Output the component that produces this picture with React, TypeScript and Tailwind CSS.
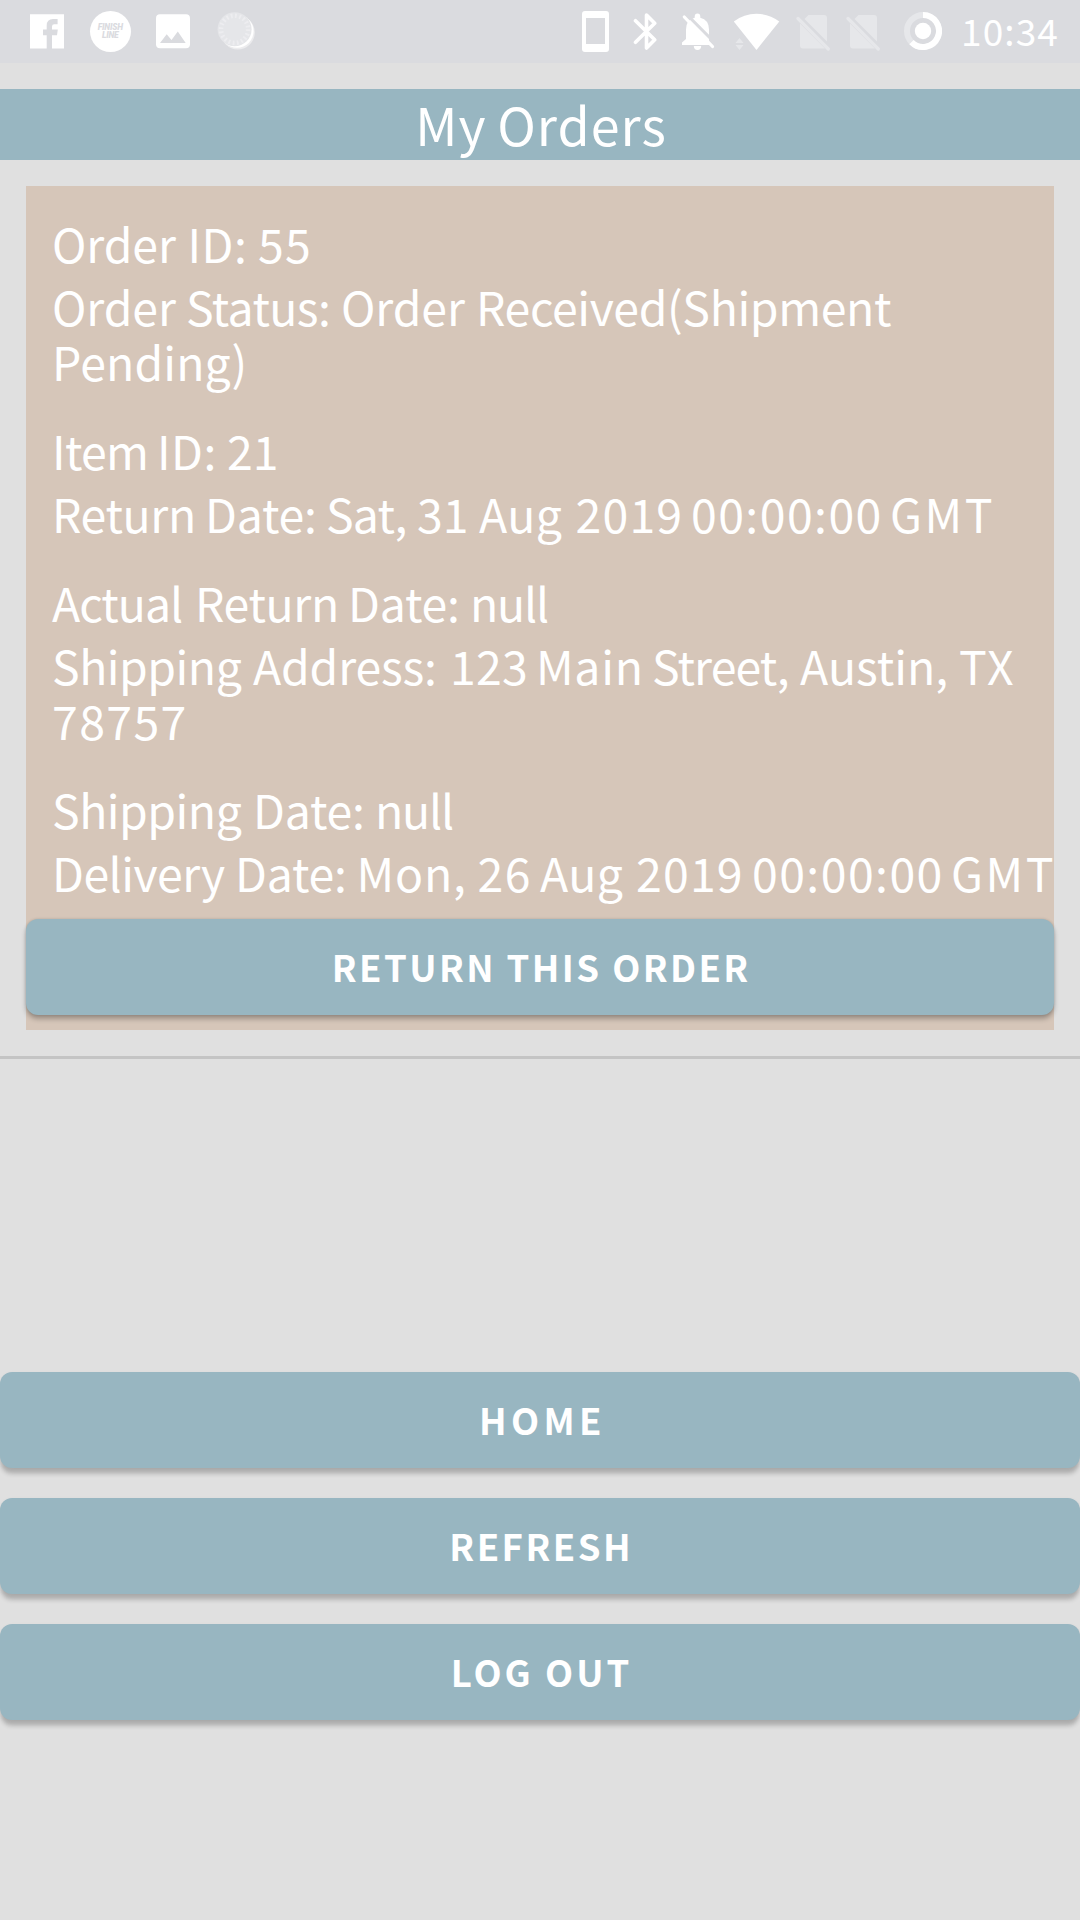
import type { ReactNode } from "react";

function FacebookIcon() {
  return (
    <svg className="h-[63px] w-[34px]" viewBox="30 0 34 63">
      <path fill="#fff" d="M30 14.3H64V48.5H52V35.2H57L57.8 29.6H52V26.5Q52 24.3 54.3 24.3H57.6V19H53Q46.7 19 46.7 25.6V29.6H43V35.2H46.7V48.5H30Z" />
    </svg>
  );
}

function FinishLineIcon() {
  return (
    <div className="mt-[10.5px] flex h-[41.5px] w-[41.5px] flex-col items-center justify-center rounded-full bg-white font-['Roboto',sans-serif] text-[8.5px] leading-[8px] font-black tracking-[-0.2px] text-[#dadbdf] italic">
      <span>FINISH</span>
      <span>LINE</span>
    </div>
  );
}

function PictureIcon() {
  return (
    <svg className="h-[63px] w-[34px]" viewBox="156.5 0 34 63">
      <rect x="156.5" y="14.3" width="34" height="34" rx="4" fill="#fff" />
      <path fill="#dadbdf" d="M160.5 43 167.2 34.3 172 40 178.3 31.5 186.2 43Z" />
    </svg>
  );
}

function EclipseIcon() {
  return (
    <svg className="h-[63px] w-[38px]" viewBox="217 0 38 63">
      <circle cx="237.8" cy="32.6" r="17" fill="#ececee" />
      <circle cx="237" cy="31.2" r="16.6" fill="#fff" />
      <circle cx="234.6" cy="29.3" r="17" fill="#e5e6e9" />
      <circle cx="234.6" cy="29.3" r="13.6" fill="none" stroke="#ededf0" strokeWidth="4.5" strokeDasharray="1.8 2.472" />
    </svg>
  );
}

function PhoneIcon() {
  return (
    <svg className="h-[63px] w-[27px]" viewBox="582 0 27 63">
      <path fill="#fff" fillRule="evenodd" d="M585 11H606Q609 11 609 14V49Q609 52 606 52H585Q582 52 582 49V14Q582 11 585 11ZM586 18V44H605V18Z" />
    </svg>
  );
}

function BluetoothIcon() {
  return (
    <svg className="h-[63px] w-[25px]" viewBox="632.5 0 25 63">
      <path fill="none" stroke="#fff" strokeWidth="3.6" strokeLinecap="round" strokeLinejoin="round" d="M635 20.7 654.2 39.7 646 48V15L654.2 23.3 635 42.3" />
    </svg>
  );
}

function BellOffIcon() {
  return (
    <svg className="h-[63px] w-[33px]" viewBox="682 0 33 63">
      <path fill="#fff" d="M694.7 17.8V16.5Q694.7 13.5 697.5 13.5T700.3 16.5V17.8Q709 20 709 29.5V42L710 45H682V42.6L686 39V29.5Q686 20 694.7 17.8ZM693.8 46H701.2Q701 50 697.5 50T693.8 46Z" />
      <path stroke="#dadbdf" strokeWidth="3" d="M686.5 14.2 716 44" />
      <path stroke="#fff" strokeWidth="3.2" strokeLinecap="round" d="M684.3 17 712.5 46.5" />
    </svg>
  );
}

function WifiIcon() {
  return (
    <svg className="h-[63px] w-[47px]" viewBox="733 0 47 63">
      <path fill="#fff" d="M756.5 50 733.8 21.5Q744 13.8 756.5 13.8T779.3 21.5Z" />
      <path fill="#e6e7ea" d="M735.5 43 739.5 38 743.5 43ZM735.5 45 739.5 50 743.5 45Z" />
    </svg>
  );
}

function NoSimIcon() {
  return (
    <svg className="h-[63px] w-[34px]" viewBox="846 0 34 63">
      <path fill="#e6e7ea" d="M858.5 15H874Q877 15 877 18V41.5L854.5 19ZM850 23.5 875 48.6H853Q850 48.6 850 45.6Z" />
      <path stroke="#e6e7ea" strokeWidth="3.2" strokeLinecap="round" d="M848 18.5 878.3 49" />
    </svg>
  );
}

function BatteryRingIcon() {
  return (
    <svg className="h-[63px] w-[38px]" viewBox="904 0 38 63">
      <circle cx="923" cy="31" r="16" fill="none" stroke="#e6e7ea" strokeWidth="6" />
      <path fill="none" stroke="#fff" strokeWidth="6" d="M923 15A16 16 0 1 1 911.5 42.1" />
      <circle cx="923" cy="31" r="8.2" fill="#fff" />
    </svg>
  );
}

function StatusBar() {
  return (
    <div className="flex h-[63px] bg-[#dadbdf] pl-[30px] text-white">
      <div className="flex w-[552px]">
        <FacebookIcon />
        <div className="w-[25.5px]" />
        <FinishLineIcon />
        <div className="w-[25px]" />
        <PictureIcon />
        <div className="w-[26.5px]" />
        <EclipseIcon />
      </div>
      <PhoneIcon />
      <div className="w-[23.5px]" />
      <BluetoothIcon />
      <div className="w-[24.5px]" />
      <BellOffIcon />
      <div className="w-[18px]" />
      <WifiIcon />
      <div className="w-[16px]" />
      <NoSimIcon />
      <div className="w-[16px]" />
      <NoSimIcon />
      <div className="w-[24px]" />
      <BatteryRingIcon />
      <div className="ml-[19px] text-[37px] leading-[60px] tracking-[1.1px] whitespace-nowrap">10:34</div>
    </div>
  );
}

const RAISED = "shadow-[0_4px_5px_rgba(0,0,0,0.27),0_0_3px_rgba(0,0,0,0.14)]";
const FLOATING = "shadow-[0_7px_4px_-1px_rgba(0,0,0,0.19),0_2px_4px_rgba(0,0,0,0.08)]";

function Button({ children, className = "" }: { children: ReactNode; className?: string }) {
  return (
    <button
      className={`block h-24 w-full rounded-[12px] bg-[#98b6c1] text-[36.5px] leading-[92px] font-bold text-white ${className}`}
    >
      {children}
    </button>
  );
}

type Word = [text: string, className: string];

function Line({ words, className = "" }: { words: Word[]; className?: string }) {
  return (
    <div className={`flex whitespace-pre ${className}`}>
      {words.map(([text, style], i) => (
        <span key={i} className={`shrink-0 ${style}`}>
          {i < words.length - 1 ? `${text} ` : text}
        </span>
      ))}
    </div>
  );
}

const lines: { className: string; words: Word[] }[] = [
  {
    className: "",
    words: [
      ["Order", "w-[135.5px] tracking-[-0.1px]"],
      ["ID:", "w-[70.5px] tracking-[0.5px]"],
      ["55", "tracking-[1.3px]"],
    ],
  },
  {
    className: "mt-2",
    words: [
      ["Order", "w-[134px] tracking-[-0.1px]"],
      ["Status:", "w-[155px] tracking-[-0.6px]"],
      ["Order", "w-[135px] tracking-[-0.1px]"],
      ["Received(Shipment", "tracking-[-0.38px]"],
    ],
  },
  { className: "", words: [["Pending)", "tracking-[0.1px]"]] },
  {
    className: "mt-[34px]",
    words: [
      ["Item", "w-[105px] tracking-[-0.7px]"],
      ["ID:", "w-[70px] tracking-[0.5px]"],
      ["21", "tracking-[0px]"],
    ],
  },
  {
    className: "mt-2",
    words: [
      ["Return", "w-[153px] tracking-[-0.36px]"],
      ["Date:", "w-[121px] tracking-[-0.2px]"],
      ["Sat,", "w-[91px] tracking-[-0.8px]"],
      ["31", "w-[62px] tracking-[0px]"],
      ["Aug", "w-[96.5px] tracking-[0.3px]"],
      ["2019", "w-[115.5px] tracking-[1.2px]"],
      ["00:00:00", "w-[199px] tracking-[1.44px]"],
      ["GMT", "tracking-[2.5px]"],
    ],
  },
  {
    className: "mt-[34px]",
    words: [
      ["Actual", "w-[143px] tracking-[-1px]"],
      ["Return", "w-[153px] tracking-[-0.36px]"],
      ["Date:", "w-[122px] tracking-[-0.2px]"],
      ["null", "tracking-[-1.2px]"],
    ],
  },
  {
    className: "mt-2",
    words: [
      ["Shipping", "w-[201px] tracking-[-0.5px]"],
      ["Address:", "w-[197px] tracking-[-0.2px]"],
      ["123", "w-[86px] tracking-[0.3px]"],
      ["Main", "w-[116px] tracking-[0.7px]"],
      ["Street,", "w-[148px] tracking-[-0.9px]"],
      ["Austin,", "w-[159px]"],
      ["TX", "tracking-[1.2px]"],
    ],
  },
  { className: "", words: [["78757", "tracking-[1.4px]"]] },
  {
    className: "mt-[34px]",
    words: [
      ["Shipping", "w-[201px] tracking-[-0.5px]"],
      ["Date:", "w-[122px] tracking-[-0.2px]"],
      ["null", "tracking-[-1.2px]"],
    ],
  },
  {
    className: "mt-2",
    words: [
      ["Delivery", "w-[183px] tracking-[-0.5px]"],
      ["Date:", "w-[121.5px] tracking-[-0.2px]"],
      ["Mon,", "w-[121px] tracking-[0.8px]"],
      ["26", "w-[62.5px] tracking-[1.4px]"],
      ["Aug", "w-[96px] tracking-[0.3px]"],
      ["2019", "w-[116px] tracking-[1.2px]"],
      ["00:00:00", "w-[199px] tracking-[1.44px]"],
      ["GMT", "tracking-[2.5px]"],
    ],
  },
];

export default function App() {
  return (
    <div className="h-[1920px] w-[1080px] overflow-hidden bg-[#e0e0e0] font-['Noto_Sans_CJK_JP',sans-serif] font-normal">
      <StatusBar />
      <h1 className="mt-[26px] h-[71px] bg-[#98b6c1] pl-0.5 text-center text-[52px] leading-[69px] tracking-[1px] text-white [word-spacing:-2px]">
        My Orders
      </h1>
      <section className="mx-[26px] mt-[26px] h-[844px] bg-[#d6c6b9] pt-[28.5px] text-[46.4px] leading-[55px] text-white">
        <div className="mb-[20.5px] flex flex-col pl-[26px]">
          {lines.map((line, i) => (
            <Line key={i} {...line} />
          ))}
        </div>
        <Button className={`pl-[2.4px] tracking-[2.4px] ${RAISED}`}>RETURN THIS ORDER</Button>
      </section>
      <div className="mt-[26px] h-[3px] bg-[#c4c4c4]" />
      <nav className="mt-[313px] flex flex-col gap-[30px]">
        <Button className={`pl-[5px] tracking-[4.4px] ${FLOATING}`}>HOME</Button>
        <Button className={`pl-[2.5px] tracking-[2.5px] ${FLOATING}`}>REFRESH</Button>
        <Button className={`pl-[3px] tracking-[3px] ${FLOATING}`}>LOG OUT</Button>
      </nav>
    </div>
  );
}
